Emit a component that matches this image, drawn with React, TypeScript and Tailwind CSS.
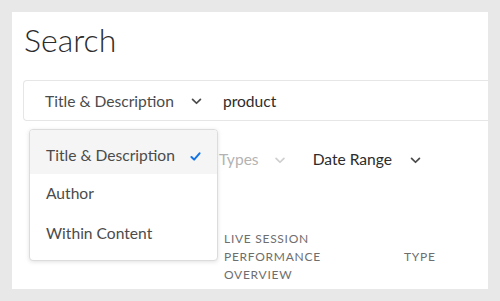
import React from 'react';

const Chevron = ({ className }: { className?: string }) => (
    <svg viewBox="0 0 12 8" className={className} fill="none" stroke="currentColor" strokeWidth="2" strokeLinecap="round" strokeLinejoin="round">
        <polyline points="1.5,1.5 6,6 10.5,1.5" />
    </svg>
);

export default function App() {
    return (
        <div className="relative w-[500px] h-[301px] overflow-hidden bg-[#e8e8e8] p-3 font-['Lato',_sans-serif]">
            <div className="h-[277px] bg-white pt-2 pl-[11px] overflow-hidden">
                {/* Title */}
                <h1 className="pl-[1px] text-[32px] leading-[40px] font-light text-[#2c2c2c]">Search</h1>

                {/* Search bar */}
                <div className="mt-5 flex h-[41px] items-center rounded-l-[4px] border border-r-0 border-[#e6e6e6] pl-[21px] pt-[2px]">
                    <span className="text-[15.6px] text-[#4b4b4b]">Title &amp; Description</span>
                    <Chevron className="ml-[17px] h-[7px] w-[11px] text-[#4b4b4b]" />
                    <span className="ml-[21px] text-[15.6px] text-[#2c2c2c]">product</span>
                </div>

                {/* Filters */}
                <div className="mt-[19px] flex h-10 items-center pl-[196px]">
                    <span className="text-[15.6px] text-[#b3b3b3]">Types</span>
                    <Chevron className="ml-[15px] h-[7px] w-[12px] text-[#cfcfcf]" />
                    <span className="ml-[27px] text-[15.6px] text-[#2c2c2c]">Date Range</span>
                    <Chevron className="ml-[18px] h-[7px] w-[11px] text-[#4b4b4b]" />
                </div>

                {/* Table header */}
                <div className="mt-[50px] flex items-center text-[12px] leading-[18px] tracking-[0.06em] text-[#6e6e6e] uppercase">
                    <div className="w-[201px] pl-[22px]">Title</div>
                    <div className="w-[180px]">
                        Live Session
                        <br />
                        Performance
                        <br />
                        Overview
                    </div>
                    <div>Type</div>
                </div>
            </div>

            {/* Dropdown menu */}
            <div className="absolute left-[29px] top-[129px] w-[189px] overflow-hidden rounded-[4px] border border-[#dcdcdc] bg-white pb-[6px] shadow-[0_1px_4px_rgba(0,0,0,0.12)]">
                <div className="flex h-[44px] items-center justify-between bg-[#f5f5f5] pl-4 pr-[16px] pt-2">
                    <span className="text-[15.6px] text-[#4b4b4b]">Title &amp; Description</span>
                    <svg viewBox="0 0 12 10" className="h-[9px] w-[11px] text-[#1473e6]" fill="none" stroke="currentColor" strokeWidth="2.2" strokeLinecap="round" strokeLinejoin="round">
                        <polyline points="1.5,5.5 4.5,8.5 10.5,1.5" />
                    </svg>
                </div>
                <div className="flex h-10 items-center pl-4 text-[15.6px] text-[#4b4b4b]">Author</div>
                <div className="flex h-10 items-center pl-4 text-[15.6px] text-[#4b4b4b]">Within Content</div>
            </div>
        </div>
    );
}
